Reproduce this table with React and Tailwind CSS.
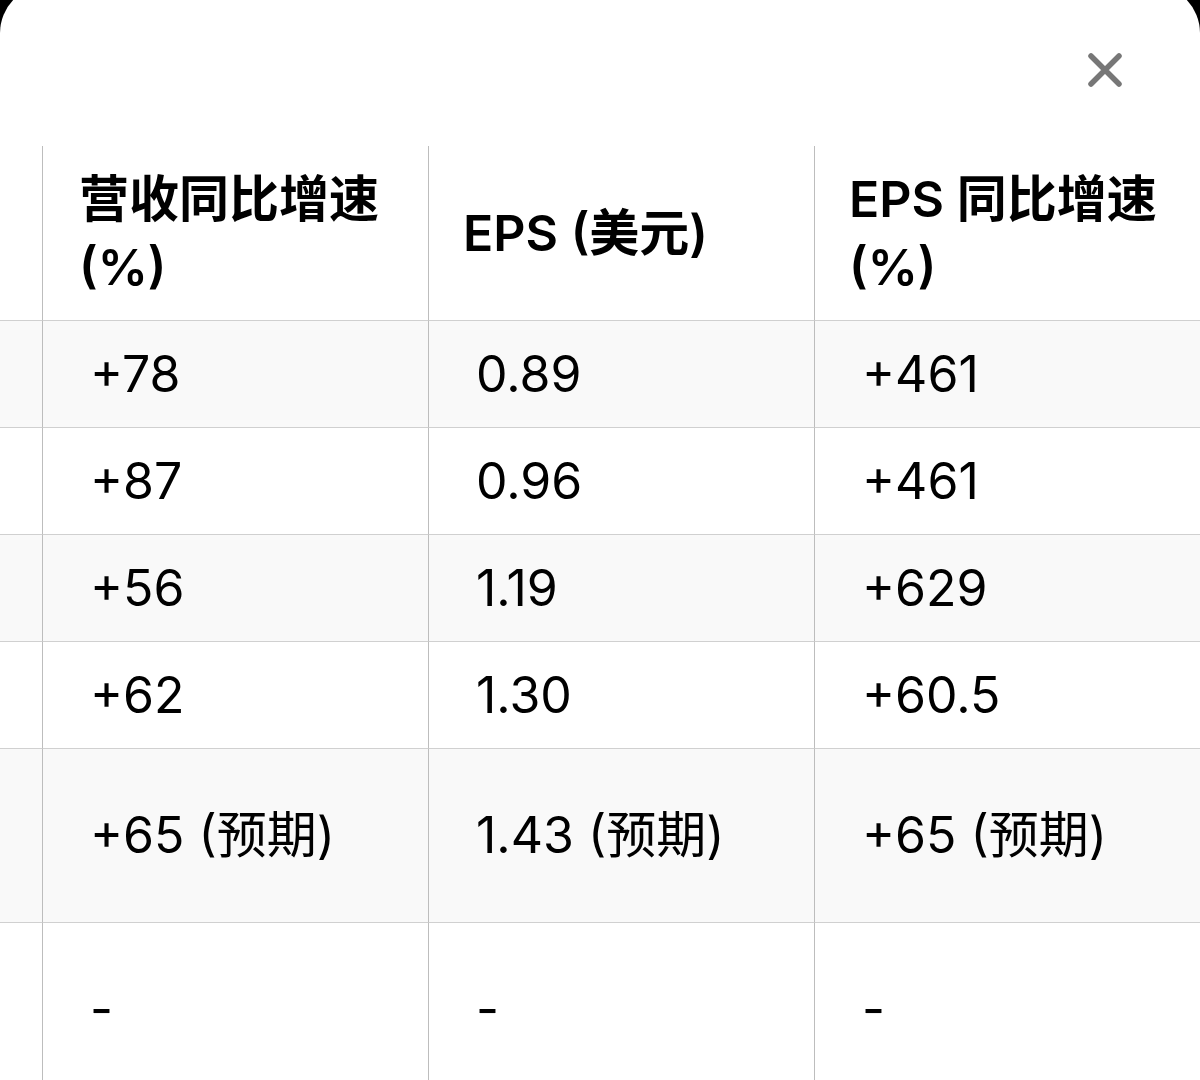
import React from "react";

const rows = [
  { h: "h-[107px]", bg: "bg-[#f9f9f9]", c: ["+78", "0.89", "+461"] },
  { h: "h-[107px]", bg: "bg-white", c: ["+87", "0.96", "+461"] },
  { h: "h-[107px]", bg: "bg-[#f9f9f9]", c: ["+56", "1.19", "+629"] },
  { h: "h-[107px]", bg: "bg-white", c: ["+62", "1.30", "+60.5"] },
  { h: "h-[174px]", bg: "bg-[#f9f9f9]", c: ["+65 (预期)", "1.43 (预期)", "+65 (预期)"] },
  { h: "h-[174px]", bg: "bg-white", c: ["-", "-", "-"] },
];

const font = { fontFamily: "Inter, 'Noto Sans CJK SC', sans-serif" };

export default function App() {
  return (
    <div className="w-[1200px] h-[1080px] bg-black overflow-hidden">
      <div
        className="w-[1200px] h-[1110px] -mt-[15px] bg-white rounded-t-[48px] overflow-hidden text-black"
        style={font}
      >
        <div className="h-[161px] flex justify-end items-start pt-[64px] pr-[74px]">
          <svg width="42" height="42" viewBox="0 0 42 42" className="block">
            <path
              d="M7 7 L35 35 M35 7 L7 35"
              stroke="#777"
              strokeWidth="5.5"
              strokeLinecap="round"
              fill="none"
            />
          </svg>
        </div>
        <div className="grid grid-cols-[43px_386px_386px_386px]">
          <div className="h-[174px] border-r border-[#bdbdbd]" />
          <div className="h-[174px] border-r border-[#bdbdbd] flex items-center pl-[36px] pr-4 text-[50px] leading-[68px] font-semibold">
            <div>营收同比增速<br />(%)</div>
          </div>
          <div className="h-[174px] border-r border-[#bdbdbd] flex items-center pl-[34px] text-[50px] leading-[68px] font-semibold">
            EPS (美元)
          </div>
          <div className="h-[174px] border-r border-[#bdbdbd] flex items-center pl-[34px] text-[50px] leading-[68px] font-semibold whitespace-nowrap">
            <div>EPS 同比增速<br />(%)</div>
          </div>
          {rows.map((r, i) => (
            <React.Fragment key={i}>
              <div className={`${r.h} ${r.bg} border-t border-[#d0d0d0] border-r border-r-[#bdbdbd]`} />
              {r.c.map((t, j) => (
                <div
                  key={j}
                  className={`${r.h} ${r.bg} border-t border-[#d0d0d0] border-r border-r-[#bdbdbd] flex items-center pl-[47px] text-[50px] font-normal whitespace-nowrap`}
                >
                  {t}
                </div>
              ))}
            </React.Fragment>
          ))}
        </div>
      </div>
    </div>
  );
}
